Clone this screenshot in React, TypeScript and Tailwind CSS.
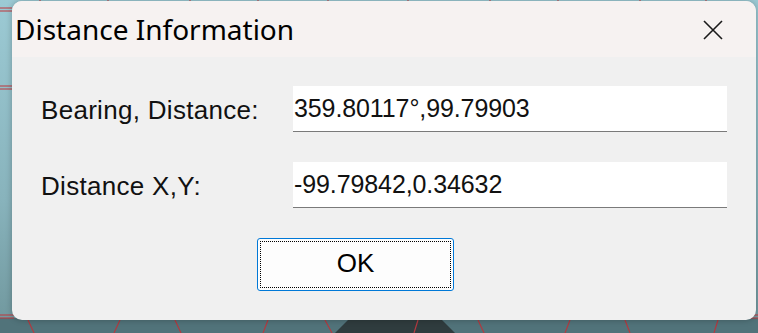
import React from 'react';

const Desktop = () => (
  <svg className="absolute inset-0" width="758" height="333" viewBox="0 0 758 333">
    <defs>
      <linearGradient id="bg" x1="0" y1="0" x2="0" y2="1">
        <stop offset="0" stopColor="#9ccad4" />
        <stop offset="0.6" stopColor="#88b3bc" />
        <stop offset="1" stopColor="#6f969c" />
      </linearGradient>
    </defs>
    <rect width="758" height="333" fill="url(#bg)" />
    <rect x="0" y="318" width="758" height="15" fill="#51737a" />
    <path d="M335 333 L350 318 L440 318 L455 333 Z" fill="#2f3c3e" />
    <path d="M0 8 H12 M0 11 H12 M0 86 H12 M0 89 H12 M0 315 H14 M0 318 H14" stroke="#c0353a" strokeWidth="1" />
    <path d="M743 315 H758 M743 318 H758" stroke="#c0353a" strokeWidth="1" />
    <path d="M28 320 L34 333 M120 320 L114 333 M175 320 L181 333 M268 320 L263 333 M325 320 L332 333 M418 320 L414 333 M478 320 L484 333 M570 320 L565 333 M625 320 L630 333 M718 320 L714 333"
      stroke="#b23a40" strokeWidth="1.2" />
    <path d="M40 0 V2 M108 0 V2 M190 0 V2 M258 0 V2 M328 0 V2 M408 0 V2 M490 0 V2 M558 0 V2 M640 0 V2 M706 0 V2"
      stroke="#c0353a" strokeWidth="1" />
  </svg>
);

const Field = ({ label, value }: { label: string; value: string }) => (
  <div className="flex items-center">
    <div className="w-[252px] pt-[2px] text-[26px] leading-none tracking-[0.3px] text-[#111]">{label}</div>
    <div className="flex h-[46px] w-[434px] items-center border-b border-[#7a7a7a] bg-white pl-[1px]">
      <span className="text-[25px] leading-none tracking-[-0.1px] text-[#111]">{value}</span>
    </div>
  </div>
);

export default function App() {
  return (
    <div
      className="relative h-[333px] w-[758px] overflow-hidden"
      style={{ fontFamily: '"Liberation Sans", Arial, sans-serif' }}
    >
      <Desktop />
      <div className="relative pl-[12px] pt-[1px]">
        <div className="h-[319px] w-[744px] overflow-hidden rounded-[10px] bg-[#f0f0f0] shadow-[0_0_6px_rgba(0,0,0,0.25)]">
          <div className="flex h-[56px] items-center justify-between bg-[#f6f2f1] pl-[3px] pr-[33px]">
            <span
              className="text-[28px] leading-none text-black"
              style={{ fontFamily: '"Noto Sans", "Liberation Sans", sans-serif' }}
            >
              Distance Information
            </span>
            <svg width="20" height="20" viewBox="0 0 20 20" className="mt-[1px]">
              <path d="M1 1 L19 19 M19 1 L1 19" stroke="#1a1a1a" strokeWidth="1.6" />
            </svg>
          </div>
          <div className="flex flex-col gap-[30px] pl-[29px] pt-[29px]">
            <Field label="Bearing, Distance:" value="359.80117°,99.79903" />
            <Field label="Distance X,Y:" value="-99.79842,0.34632" />
            <div className="pl-[216px]">
              <button className="relative h-[53px] w-[197px] rounded-[3px] border border-[#0078d7] bg-[#fdfdfd]">
                <span className="absolute inset-[2px] border border-dotted border-black" />
                <span className="relative text-[26px] leading-none text-black">OK</span>
              </button>
            </div>
          </div>
        </div>
      </div>
    </div>
  );
}
